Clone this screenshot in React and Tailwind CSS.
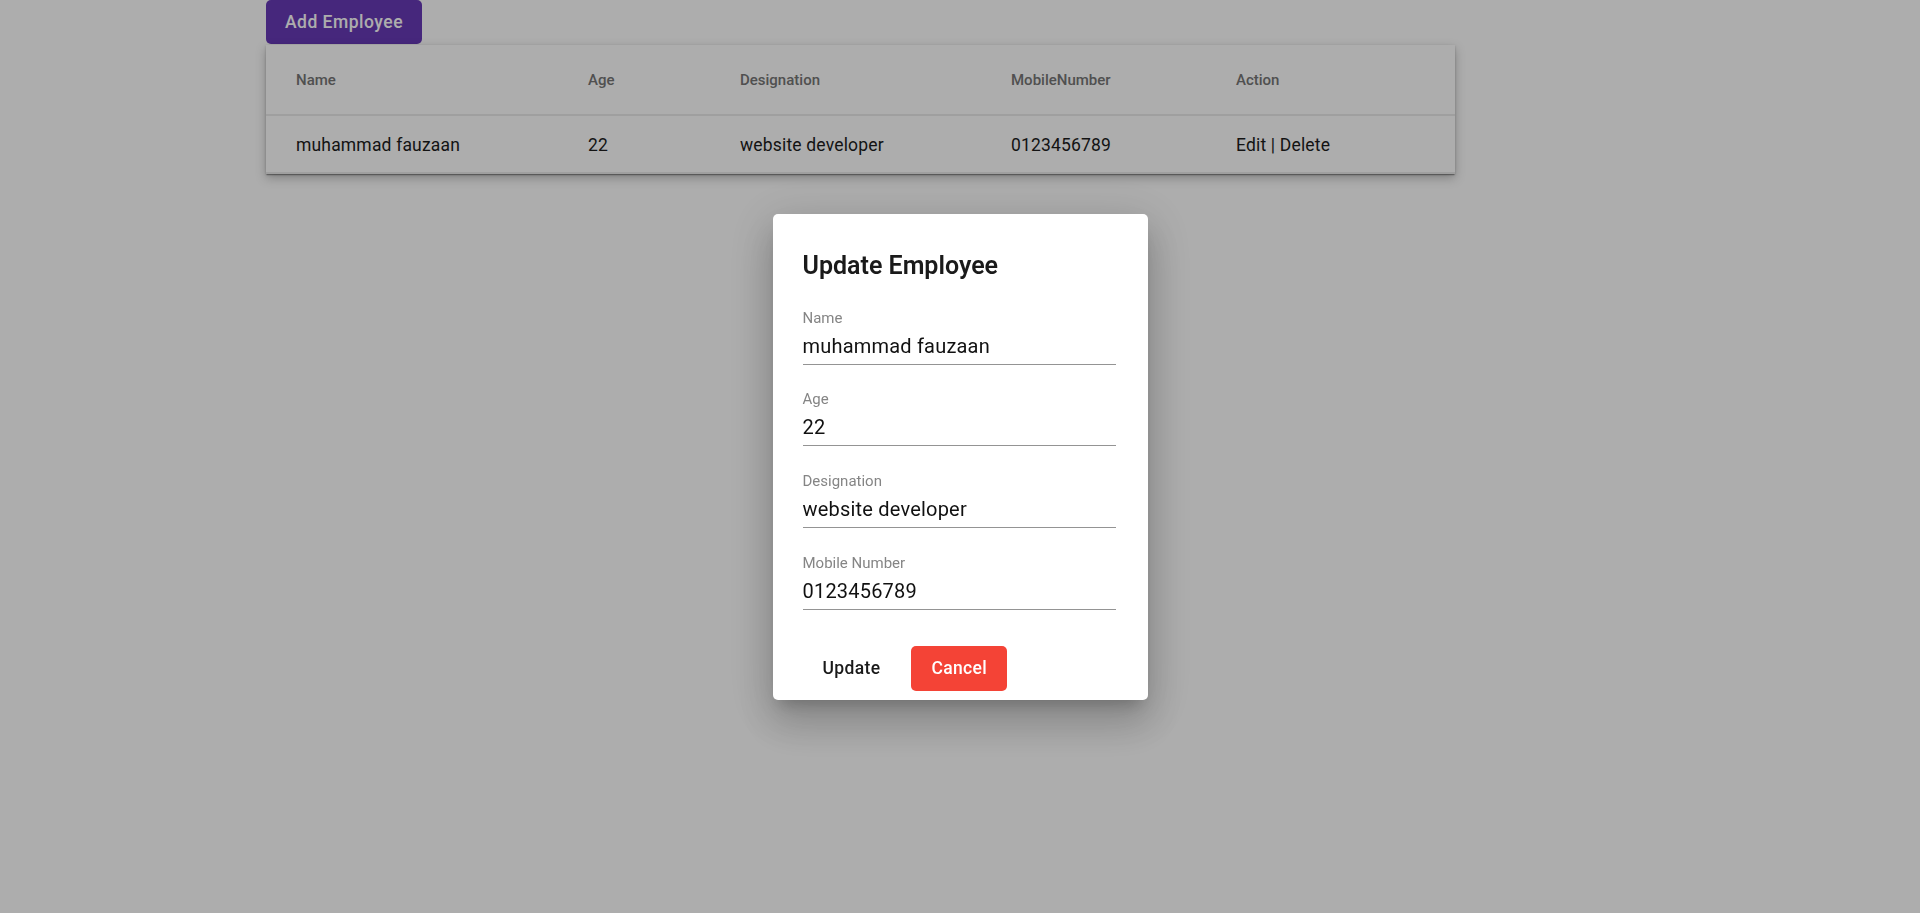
import React from "react";

const employees = [
  { name: "muhammad fauzaan", age: "22", designation: "website developer", mobile: "0123456789" },
];

const fields = [
  { label: "Name", value: "muhammad fauzaan" },
  { label: "Age", value: "22" },
  { label: "Designation", value: "website developer" },
  { label: "Mobile Number", value: "0123456789" },
];

const cols = "grid grid-cols-[292px_152px_271px_225px_1fr]";

const App = () => {
  return (
    <div className="relative min-h-[913px] bg-white font-['Roboto',sans-serif]">
      {/* Lista */}
      <div className="ml-[266px] w-[1189px]">
        <button className="block h-[44px] w-[156px] rounded-[5px] bg-[#673ab7] text-[17.5px] font-medium tracking-[0.02857em] text-white">
          Add Employee
        </button>
        <div className="mt-px bg-white shadow-[0_2px_1px_-1px_rgba(0,0,0,0.2),0_1px_1px_0_rgba(0,0,0,0.14),0_1px_3px_0_rgba(0,0,0,0.12),0_4px_10px_0_rgba(0,0,0,0.25)]">
          <div className={`${cols} h-[71px] items-center border-b-2 border-[#ebebeb] pt-[2px] text-[15px] font-medium text-[#767676]`}>
            <div className="pl-[30px]">Name</div>
            <div className="pl-[30px]">Age</div>
            <div className="pl-[30px]">Designation</div>
            <div className="pl-[30px]">MobileNumber</div>
            <div className="pl-[30px]">Action</div>
          </div>
          {employees.map((e) => (
            <div key={e.name} className={`${cols} h-[58px] items-center border-b-2 border-[#ebebeb] pt-[2px] text-[17.5px] tracking-[0.01em] text-[#1c1c1c]`}>
              <div className="pl-[30px]">{e.name}</div>
              <div className="pl-[30px]">{e.age}</div>
              <div className="pl-[30px]">{e.designation}</div>
              <div className="pl-[30px]">{e.mobile}</div>
              <div className="pl-[30px]">Edit | Delete</div>
            </div>
          ))}
        </div>
      </div>

      {/* Backdrop + dialog */}
      <div className="fixed inset-0 flex items-center justify-center bg-black/[0.32]">
        <div className="flex h-[486px] w-[375px] flex-col rounded-[5px] bg-white px-[30px] pt-[32px] pb-[9px] shadow-[0_11px_15px_-7px_rgba(0,0,0,0.2),0_24px_38px_3px_rgba(0,0,0,0.14),0_9px_46px_8px_rgba(0,0,0,0.12)]">
          <h2 className="text-[25px] leading-[40px] font-semibold text-[#1a1a1a]">Update Employee</h2>
          <div className="mt-[23px] flex flex-col gap-[25.7px] pr-[2px]">
            {fields.map((f) => (
              <div key={f.label} className="flex flex-col">
                <div className="text-[15px] leading-[18px] text-[#858585]">{f.label}</div>
                <div className="mt-[7px] border-b border-[#949494] pb-[6px] text-[20px] leading-[24px] tracking-[0.01em] text-[#111111]">
                  {f.value}
                </div>
              </div>
            ))}
          </div>
          <div className="mt-auto flex items-center gap-[11px]">
            <button className="h-[45px] rounded-[5px] px-[20px] text-[17.5px] font-medium tracking-[0.02em] text-[#1a1a1a]">
              Update
            </button>
            <button className="h-[45px] rounded-[5px] bg-[#f44336] px-[20px] text-[17.5px] font-medium tracking-[0.02em] text-white">
              Cancel
            </button>
          </div>
        </div>
      </div>
    </div>
  );
};

export default App;
